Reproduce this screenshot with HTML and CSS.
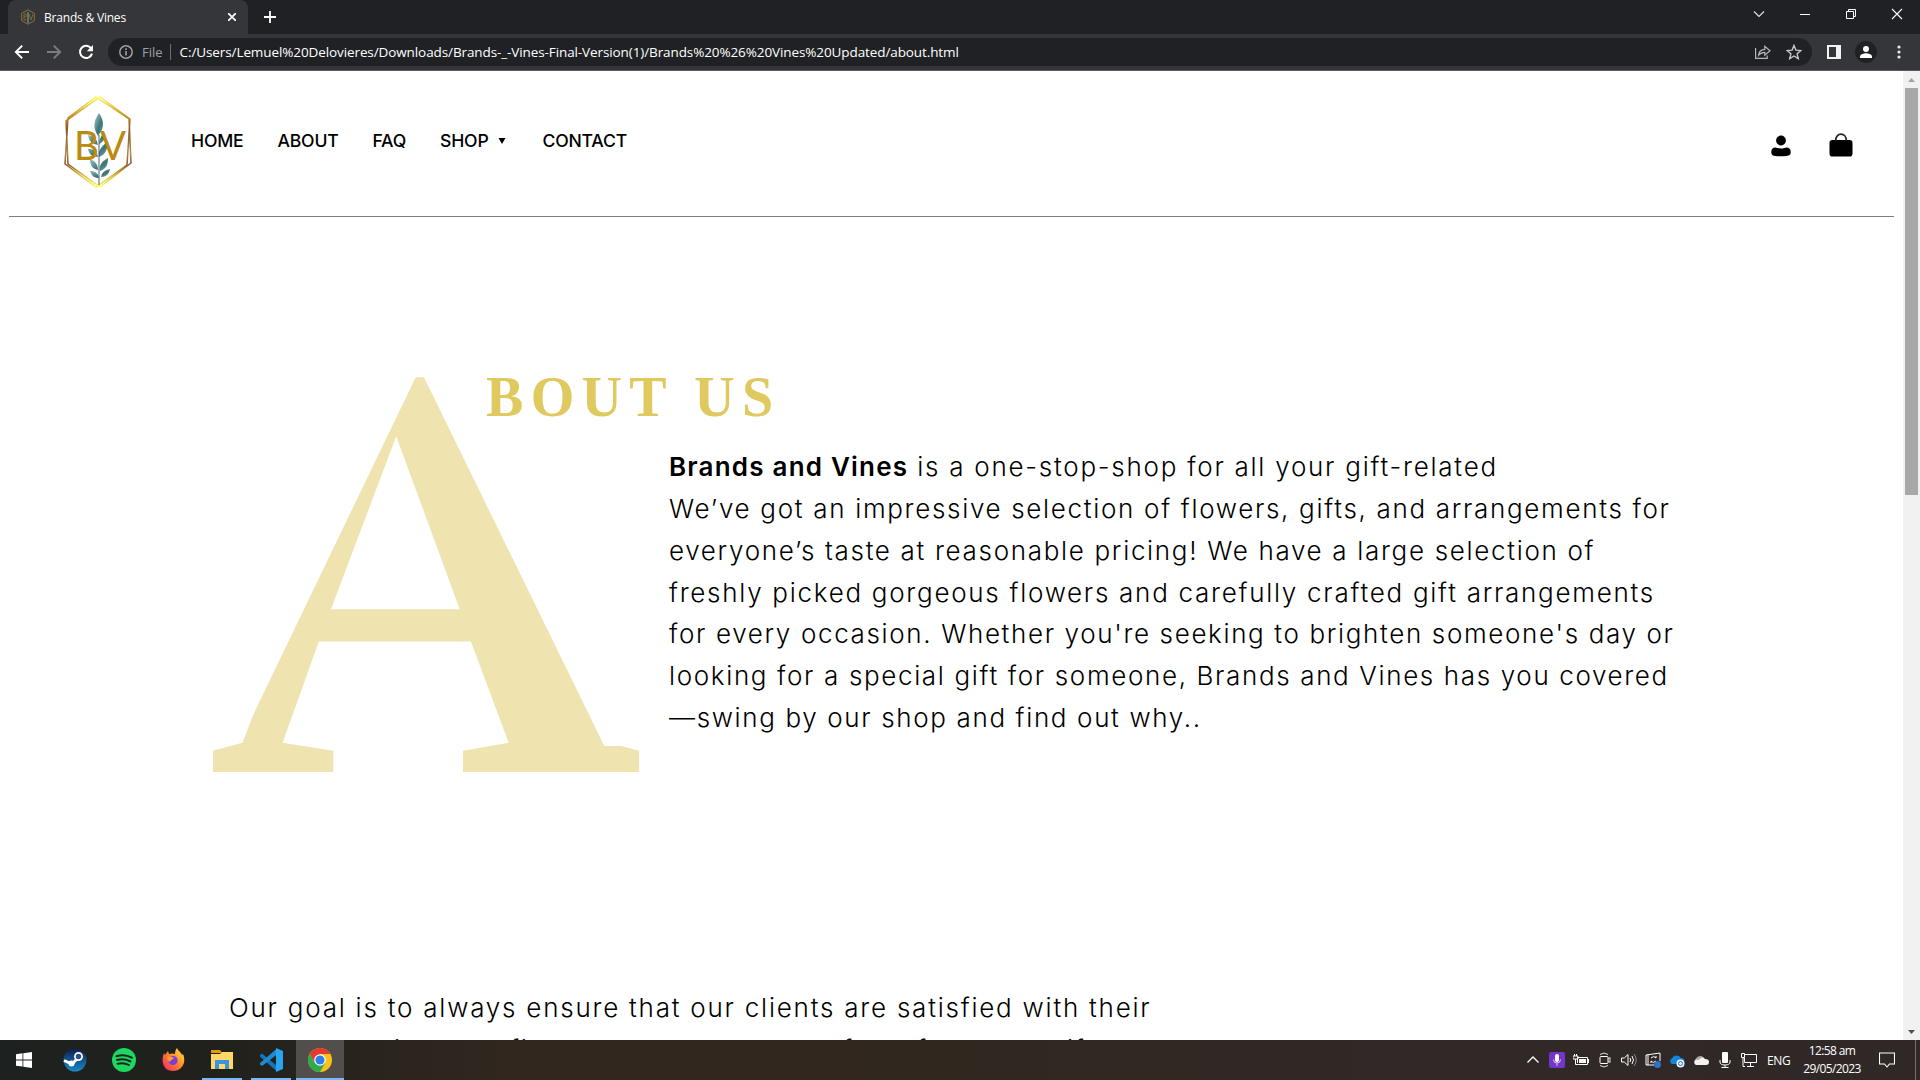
FILE: index.html
```html
<!DOCTYPE html>
<html lang="en">
<head>
<meta charset="utf-8">
<title>Brands &amp; Vines</title>
<link rel="stylesheet" href="styles.css">
</head>
<body>
<div class="window">
  <div class="tabstrip">
    <div class="tab">
      <svg class="favicon" width="16" height="16" viewBox="0 0 16 16"><path d="M8 .8l6.300 3.600v7.200L8 15.200l-6.300-3.600V4.400z" fill="none" stroke="#8b7440" stroke-width="1"/><path d="M4 5v6h2.500M4 5h2v3H4m5-3 2 6 2-6" fill="none" stroke="#8b6420"/><path d="M8 3v11" stroke="#5d8990" stroke-width="1.600"/></svg>
      <span class="tab-title">Brands &amp; Vines</span>
      <svg class="tab-close" width="8" height="8" viewBox="0 0 8 8"><path d="M0 0l8 8M8 0L0 8" stroke="#fff" stroke-width="1.700"/></svg>
    </div>
    <svg class="new-tab" width="12" height="12" viewBox="0 0 12 12"><path d="M6 0v12M0 6h12" stroke="#fff" stroke-width="1.800"/></svg>
    <div class="win-controls">
      <svg width="12" height="12" viewBox="0 0 12 12"><path d="M1 3.500l5 5 5-5" fill="none" stroke="#e4e4e4" stroke-width="1.100"/></svg>
      <svg width="12" height="12" viewBox="0 0 12 12"><path d="M1 6.500h10" stroke="#fff"/></svg>
      <svg width="12" height="12" viewBox="0 0 12 12"><path d="M1.500 3.500h7v7h-7zM3.500 3.500v-2h7v7h-2" fill="none" stroke="#fff"/></svg>
      <svg width="12" height="12" viewBox="0 0 12 12"><path d="M1 1l10 10M11 1L1 11" stroke="#fff" stroke-width="1.100"/></svg>
    </div>
  </div>
  <div class="toolbar">
    <div class="nav-icons">
      <svg width="16" height="16" viewBox="0 0 16 16"><path d="M15 8H2M8.200 1.600L1.800 8l6.400 6.400" fill="none" stroke="#fff" stroke-width="1.900"/></svg>
      <svg width="16" height="16" viewBox="0 0 16 16"><path d="M1 8h13M7.800 1.600L14.200 8l-6.400 6.400" fill="none" stroke="#7c7d80" stroke-width="1.900"/></svg>
      <svg width="16" height="16" viewBox="0 0 16 16"><path d="M13.200 4.500A6.100 6.100 0 1 0 14 9.600" fill="none" stroke="#fff" stroke-width="2"/><path d="M15 1v6.200H8.800z" fill="#fff"/></svg>
    </div>
    <div class="omnibox">
      <svg width="14" height="14" viewBox="0 0 14 14"><circle cx="7" cy="7" r="6.200" fill="none" stroke="#9aa0a6" stroke-width="1.500"/><path d="M7 6v4.500M7 3.300v1.600" stroke="#9aa0a6" stroke-width="1.600"/></svg>
      <span class="scheme">File</span>
      <span class="divider"></span>
      <span class="url">C:/Users/Lemuel%20Delovieres/Downloads/Brands-_-Vines-Final-Version(1)/Brands%20%26%20Vines%20Updated/about.html</span>
      <svg class="share" width="16" height="14" viewBox="0 0 16 14"><path d="M.6 3v10.400h11.600V10.500" fill="none" stroke="#b4b6b9" stroke-width="1.200"/><path d="M3.600 10.200c.3-3.600 2.800-5.700 6.200-5.800V1.300l5.200 4.500-5.200 4.400V7.300c-2.800 0-4.700.9-6.200 2.900z" fill="none" stroke="#b4b6b9" stroke-width="1.200"/></svg>
      <svg class="star" width="16" height="16" viewBox="0 0 16 16"><path d="M8 1.400l1.900 4.700 5 .4-3.800 3.300 1.200 4.900L8 12l-4.300 2.700 1.200-4.900L1.100 6.500l5-.4z" fill="none" stroke="#c4c6c9" stroke-width="1.400"/></svg>
    </div>
    <svg class="side-panel" width="14" height="14" viewBox="0 0 14 14"><path d="M0 0h14v14H0zM2 2v10h7V2z" fill="#f1f3f4" fill-rule="evenodd"/></svg>
    <svg class="avatar" width="22" height="22" viewBox="0 0 22 22"><circle cx="11" cy="11" r="11" fill="#202124"/><circle cx="11" cy="8" r="3" fill="#fff"/><path d="M5 17v-1.500C5 13 9 12.200 11 12.200s6 .8 6 3.300V17z" fill="#fff"/></svg>
    <svg class="dots" width="4" height="14" viewBox="0 0 4 14"><circle cx="2" cy="2" r="1.600" fill="#e8eaed"/><circle cx="2" cy="7" r="1.600" fill="#e8eaed"/><circle cx="2" cy="12" r="1.600" fill="#e8eaed"/></svg>
  </div>

  <div class="viewport">
    <div class="page">
      <header class="site-header">
        <svg class="logo" width="70" height="94" viewBox="0 0 70 94">
          <defs>
            <linearGradient id="gold" x1="0" y1="0" x2="0" y2="1"><stop offset="0" stop-color="#fdfb62"/><stop offset=".2" stop-color="#c99a2c"/><stop offset=".35" stop-color="#8c5524"/><stop offset=".62" stop-color="#b08a50"/><stop offset=".74" stop-color="#8c5524"/><stop offset=".88" stop-color="#d8c040"/><stop offset="1" stop-color="#fdfb62"/></linearGradient>
            <linearGradient id="leaf" x1="0" y1="0" x2="1" y2="1"><stop offset="0" stop-color="#a9cdcd"/><stop offset=".6" stop-color="#3c7378"/><stop offset="1" stop-color="#7fb0b0"/></linearGradient>
          </defs>
          <path d="M33 2L66 24l2 44-31 24L5 69 3 26 37 2l30 22-3 46-31 22L2 69 5 23z" fill="none" stroke="url(#gold)" stroke-width="1.500"/>
          <g fill="url(#leaf)"><path d="M36 18c-6 9-6 15-1 23 6-7 7-14 1-23z"/><path d="M35 50c-6-1-9-4-10-10 6 1 9 4 10 10zM36 49c1-7 3-10 6-11 0 5-1 9-6 11z"/><path d="M35 62c-6 0-9-3-10-8 6 0 9 2 10 8zM36 62c-1-6 2-10 8-15 1 8-2 13-8 15z"/><path d="M35 75c-5-1-8-4-8-11 5 2 8 5 8 11zM37 76c-1-6 2-10 8-13 0 7-2 11-8 13z"/><path d="M36 83c-5 0-7-2-9-7 5 0 8 2 9 7zM38 82c1-5 4-7 9-8-1 5-4 8-9 8z"/></g>
          <path d="M36 40v50" stroke="#36545a" stroke-width=".9"/>
          <text class="logo-text" x="11" y="65" textLength="25" lengthAdjust="spacingAndGlyphs">B</text>
          <text class="logo-text" x="37" y="65" textLength="26" lengthAdjust="spacingAndGlyphs">V</text>
        </svg>
        <nav class="menu">
          <a>HOME</a><a>ABOUT</a><a>FAQ</a><a class="shop">SHOP<svg width="8" height="6" viewBox="0 0 8 6"><path d="M.5 0h7L4 6z"/></svg></a><a>CONTACT</a>
        </nav>
        <div class="actions">
          <svg class="user" width="20" height="22" viewBox="0 0 20 22"><circle cx="10" cy="5.500" r="4.900"/><path d="M.3 17c0-3 1.500-4.600 4-4.600 1.500 0 3 1.200 5.700 1.200s4.200-1.200 5.700-1.200c2.500 0 4 1.600 4 4.600 0 3-1 4.300-9.700 4.300S.3 20 .3 17z"/></svg>
          <svg width="24" height="24" viewBox="0 0 24 24"><rect x=".5" y="7" width="23" height="16.500" rx="2.800"/><path d="M6.600 8C6.600-1.200 17.400-1.200 17.400 8" fill="none" stroke="#222" stroke-width="1.700"/></svg>
        </div>
      </header>
      <section class="about">
        <h1 class="title"><span class="cap">A</span><span class="rest">BOUT US</span></h1>
        <p class="copy"><span class="line intro"><b>Brands and Vines</b> is a one-stop-shop for all your gift-related</span><span class="line">We’ve got an impressive selection of flowers, gifts, and arrangements for</span><span class="line">everyone’s taste at reasonable pricing! We have a large selection of</span><span class="line wide">freshly picked gorgeous flowers and carefully crafted gift arrangements</span><span class="line tight">for every occasion. Whether you're seeking to brighten someone's day or</span><span class="line tight">looking for a special gift for someone, Brands and Vines has you covered</span><span class="line tight">—swing by our shop and find out why..</span></p>
      </section>
      <section class="goal">
        <span class="line">Our goal is to always ensure that our clients are satisfied with their</span>
        <div class="cut-line"><span>i</span><span>fi</span><span>f</span><span>f</span><span>if</span></div>
      </section>
    </div>
    <div class="scrollbar">
      <svg width="17" height="17" viewBox="0 0 17 17"><path d="M5 11l3.500-4L12 11z" fill="#a3a3a3"/></svg>
      <div class="thumb"></div>
      <svg class="down" width="17" height="17" viewBox="0 0 17 17"><path d="M5 7l3.500 4L12 7z" fill="#505050"/></svg>
    </div>
  </div>

  <div class="taskbar">
    <div class="task start"><svg width="16" height="16" viewBox="0 0 16 16"><path d="M0 2.200l6.500-.9v6.200H0zM7.300 1.200L16 0v7.500H7.300zM0 8.400h6.500v6.200L0 13.700zM7.300 8.400H16V16l-8.700-1.200z" fill="#fff"/></svg></div>
    <div class="task"><svg width="24" height="24" viewBox="0 0 24 24"><defs><linearGradient id="st" x1="0" y1="0" x2="0" y2="1"><stop offset="0" stop-color="#111d4a"/><stop offset="1" stop-color="#1a8ac4"/></linearGradient></defs><circle cx="12" cy="12" r="11.500" fill="url(#st)"/><path d="M1 12.500l8 3.500 6-6" fill="none" stroke="#fff" stroke-width="3"/><circle cx="8.500" cy="15.500" r="3" fill="#fff"/><circle cx="15.500" cy="8.500" r="3.600" fill="#2a4f86" stroke="#fff" stroke-width="1.700"/></svg></div>
    <div class="task"><svg width="24" height="24" viewBox="0 0 24 24"><circle cx="12" cy="12" r="12" fill="#1ed760"/><path d="M4.500 8.200c5-1.500 11-1 15.300 1.500M5 12c4.500-1.300 9.500-.8 13.300 1.400M5.600 15.800c4-1 8-.7 11.300 1.200" fill="none" stroke="#1b231f" stroke-width="2" stroke-linecap="round"/></svg></div>
    <div class="task"><svg width="24" height="24" viewBox="0 0 24 24"><defs><linearGradient id="ff" x1="1" y1="0" x2="0" y2="1"><stop offset="0" stop-color="#fff044"/><stop offset=".45" stop-color="#ff8a2a"/><stop offset="1" stop-color="#f0206a"/></linearGradient></defs><path d="M3 5l1 2 3-4 1 3c2-.5 4-1 6 0 0-3 1-5 2-6 1 3 4 4 5 7l1-1c4 10-2 17-10 17S-1 16 3 5z" fill="url(#ff)"/><circle cx="12" cy="12.500" r="4.600" fill="#7a3fd8"/><path d="M6 9c3-1 5 0 7 1-1 2-3 1-4 4-2-1-3-3-3-5z" fill="#ff9a2c"/></svg></div>
    <div class="task open"><svg width="22" height="20" viewBox="0 0 22 20"><path d="M0 0h9l2 3H0z" fill="#e09a10"/><path d="M0 4h9l2-2h11v17H0z" fill="#ffd766"/><path d="M4 10h14v9h-4v-5H8v5H4z" fill="#3a93dd"/></svg></div>
    <div class="task open"><svg width="24" height="24" viewBox="0 0 24 24"><path d="M1 7l2-1.500L18 18v5.500L1 8.500z" fill="#1277be"/><path d="M1 16.500L3 18 18 6.500V.5L1 15z" fill="#1b8bd4"/><path d="M17 0l7 3v18l-7 3z" fill="#2aa3f1"/></svg></div>
    <div class="task open active"><svg width="24" height="24" viewBox="0 0 24 24"><circle cx="12" cy="12" r="12" fill="#fbc116"/><path d="M1.600 6A12 12 0 0 1 22.400 6H12L7 15z" fill="#e33b2e"/><path d="M1.600 6A12 12 0 0 0 12 24l5.200-9-10.400 0z" fill="#2da94f"/><circle cx="12" cy="12" r="5.800" fill="#fff"/><circle cx="12" cy="12" r="4.600" fill="#2f7de9"/></svg></div>
    <div class="tray">
      <svg width="12" height="16" viewBox="0 0 12 16"><path d="M.5 10.500L6 5l5.500 5.500" fill="none" stroke="#fff" stroke-width="1.300"/></svg>
      <svg width="16" height="16" viewBox="0 0 16 16"><rect width="16" height="16" rx="2" fill="#7436c8"/><rect x="6" y="2" width="4" height="8" rx="2" fill="#fff"/><path d="M4.500 7.500a3.500 3.500 0 0 0 7 0M8 11v3" fill="none" stroke="#ddc8f4"/></svg>
      <svg width="16" height="16" viewBox="0 0 16 16"><path d="M4.500 11V5.500h10v7h-9M15.500 7v4" fill="none" stroke="#fff"/><path d="M6 7h7v4H6z" fill="#fff"/><path d="M0 4h5v3H0zM1.500 2v2M3.500 2v2M2.500 7v5.500h3" fill="none" stroke="#fff"/></svg>
      <svg width="12" height="16" viewBox="0 0 12 16"><rect x="1" y="4.500" width="8" height="7" rx="1" fill="none" stroke="#fff"/><path d="M9 7l2-1.500v5L9 9M1 2.500Q5-.5 9 2.500M1 13.500q4 3 8 0" fill="none" stroke="#ddd"/></svg>
      <svg width="16" height="16" viewBox="0 0 16 16"><path d="M.5 6h2.800L7 2.500v11L3.300 10H.5z" fill="none" stroke="#fff"/><path d="M9 6q1.500 2 0 4M11 4q3 4 0 8" fill="none" stroke="#fff"/><path d="M13 2q4.500 6 0 12" fill="none" stroke="#888"/></svg>
      <svg width="16" height="16" viewBox="0 0 16 16"><path d="M9 13H1V3l14-2v8M3 3v10" fill="none" stroke="#fff"/><path d="M6 6q3-3 5 0V4M11 9q-3 3-5 0v2" fill="none" stroke="#fff"/><circle cx="12.500" cy="12.500" r="3.500" fill="#2d74c4"/></svg>
      <svg width="16" height="16" viewBox="0 0 16 16"><path d="M3 12a3 3 0 0 1 0-5.500A5 5 0 0 1 12 6q3 0 3.500 3l-3 3z" fill="#1485dc"/><circle cx="11.500" cy="11.500" r="4" fill="#e8f2fb"/><circle cx="11.500" cy="11.500" r="2" fill="none" stroke="#2d74c4"/></svg>
      <svg width="16" height="16" viewBox="0 0 16 16"><path d="M3 13a3 3 0 0 1 0-5.500A5 5 0 0 1 12 7q4 0 4 3t-3 3z" fill="#f2f2f2"/><path d="M1 8.500Q3 7 5 8l5-3q-4-3-7.500 2z" fill="#a9a6a4"/></svg>
      <svg width="12" height="16" viewBox="0 0 12 16"><rect x="3" y="0" width="6" height="11" rx="1" fill="#fff"/><path d="M1 8v2q0 3 5 3t5-3V8M6 13v2.500M2.500 15.500h7" fill="none" stroke="#fff"/></svg>
      <svg width="16" height="16" viewBox="0 0 16 16"><path d="M4 2.500h11.500v8H3.500V6M9.500 11v3.500M6 14.500h7M.5 1.500h3v4h-3zM2 6v8.500h2" fill="none" stroke="#fff"/></svg>
    </div>
    <span class="lang">ENG</span>
    <div class="clock"><span>12:58 am</span><span>29/05/2023</span></div>
    <svg class="notif" width="16" height="16" viewBox="0 0 16 16"><path d="M.5 1h15v11h-5L8 15l-2.500-3h-5z" fill="none" stroke="#fff" stroke-width="1.100"/></svg>
    <span class="peek"></span>
  </div>
</div>
</body>
</html>
```
FILE: styles.css
```css
* { box-sizing: border-box; }
body { margin: 0; overflow: hidden; background: #fff; }
svg { display: block; flex: none; }
.window { width: 1920px; height: 1080px; display: flex; flex-direction: column; font-family: "Open Sans", "Noto Sans", sans-serif; }

/* Browser chrome */
.tabstrip { height: 34px; background: #202124; display: flex; align-items: flex-start; padding-left: 8px; flex: none; }
.tab { width: 240px; height: 34px; background: #35363a; border-radius: 8px 8px 0 0; display: flex; align-items: center; padding: 0 12px; }
.tab-title { color: #fff; font-size: 12px; letter-spacing: -.2px; margin-left: 8px; flex: 1; }
.new-tab { margin: 11px 0 0 16px; }
.win-controls { margin-left: auto; display: flex; gap: 34px; padding: 8px 17px 0 0; }

.toolbar { height: 37px; background: #35363a; border-bottom: 1px solid #5d5663; display: flex; align-items: center; flex: none; padding-left: 14px; }
.nav-icons { display: flex; gap: 16px; width: 94px; }
.omnibox { width: 1704px; height: 28px; border-radius: 14px; background: #202124; display: flex; align-items: center; padding: 0 10px 0 11px; font-size: 13px; }
.scheme { color: #9aa0a6; margin-left: 9px; }
.divider { width: 1px; height: 16px; background: #6c6e72; margin: 0 9px 0 7px; }
.url { color: #fff; font-size: 13.5px; letter-spacing: -.1px; flex: 1; white-space: nowrap; }
.share { margin-right: 15px; }
.side-panel { margin-left: 15px; }
.avatar { margin-left: 14px; }
.dots { margin-left: 20px; }

/* Site */
.viewport { height: 969px; display: flex; flex: none; overflow: hidden; }
.page { flex: 1; overflow: hidden; padding: 0 9px; }
.site-header { height: 146px; border-bottom: 1px solid #7f7f7f; display: flex; align-items: flex-start; padding: 24px 41px 0 54px; }
.logo-text { font: 41.5px Lato, sans-serif; fill: #bb8a10; }
.menu { display: flex; gap: 34px; margin: 35px 0 0 58px; font: 500 17.6px/22px Inter, sans-serif; letter-spacing: -.2px; color: #000; }
.shop { display: flex; align-items: center; gap: 10px; margin-right: 2px; }
.actions { margin: 38px 0 0 auto; display: flex; gap: 38px; align-items: flex-start; }
.user { margin-top: 2px; }

.about { height: 740px; display: grid; grid-template-columns: 469px 1fr; }
.title { margin: 0; font-family: "Liberation Serif", serif; font-weight: 700; color: #e0c95f; display: flex; align-items: flex-start; white-space: nowrap; }
.cap { font-size: 598px; line-height: 396px; width: 279px; height: 396px; flex: none; color: #efe3b0; margin: 155px 0 0 198px; transform: scaleX(1.011); transform-origin: 0 0; clip-path: polygon(208px 2px, 213px 2px, 393px 374px, 440px 374px, 440px 405px, -5px 405px, -5px 363px, 36px 363px); }
.rest { font-size: 56px; line-height: 60px; letter-spacing: 7.300px; margin-top: 150px; }
.copy { margin: 229px 0 0 191px; }
.copy, .goal { font: 300 26px/41.85px Inter, sans-serif; letter-spacing: 1.680px; color: #000; }
.line { display: block; white-space: nowrap; }
.intro { letter-spacing: 1.740px; }
.wide { letter-spacing: 1.720px; }
.tight { letter-spacing: 1.640px; }
.copy b { font-weight: 600; letter-spacing: 1.200px; }
.goal { padding-left: 220px; margin-top: 30px; letter-spacing: 1.770px; }
.cut-line { display: grid; grid-template-columns: 116px 333px 74px 150px 60px; padding-left: 165px; }

.scrollbar { width: 17px; background: #f1f1f1; display: flex; flex-direction: column; }
.thumb { width: 13px; height: 407px; background: #a8a8a8; margin-left: 2px; }
.down { margin-top: auto; }

/* Taskbar */
.taskbar { height: 40px; background: linear-gradient(90deg, #1d211f 0, #20211c 200px, #31271f 520px, #30271f 900px, #312928 1500px, #302826 1920px); display: flex; align-items: center; color: #fff; font-size: 12px; flex: none; }
.task { width: 48px; height: 40px; display: flex; align-items: center; justify-content: center; margin-right: 1px; flex: none; }
.start { margin-right: 3px; }
.open { background: linear-gradient(#76b9ff, #76b9ff) center bottom / 40px 2px no-repeat; }
.active { background-size: 48px 2px; background-color: #524e4b; }
.tray { margin-left: auto; display: grid; grid-template-columns: repeat(10, 24px); justify-items: center; }
.lang { margin-left: 6px; width: 24px; letter-spacing: -.3px; }
.clock { margin-left: 12px; width: 58px; display: flex; flex-direction: column; align-items: center; line-height: 18px; letter-spacing: -.6px; white-space: nowrap; }
.notif { margin-left: 18px; }
.peek { width: 1px; height: 40px; background: #77716f; margin: 0 4px 0 20px; }
```
